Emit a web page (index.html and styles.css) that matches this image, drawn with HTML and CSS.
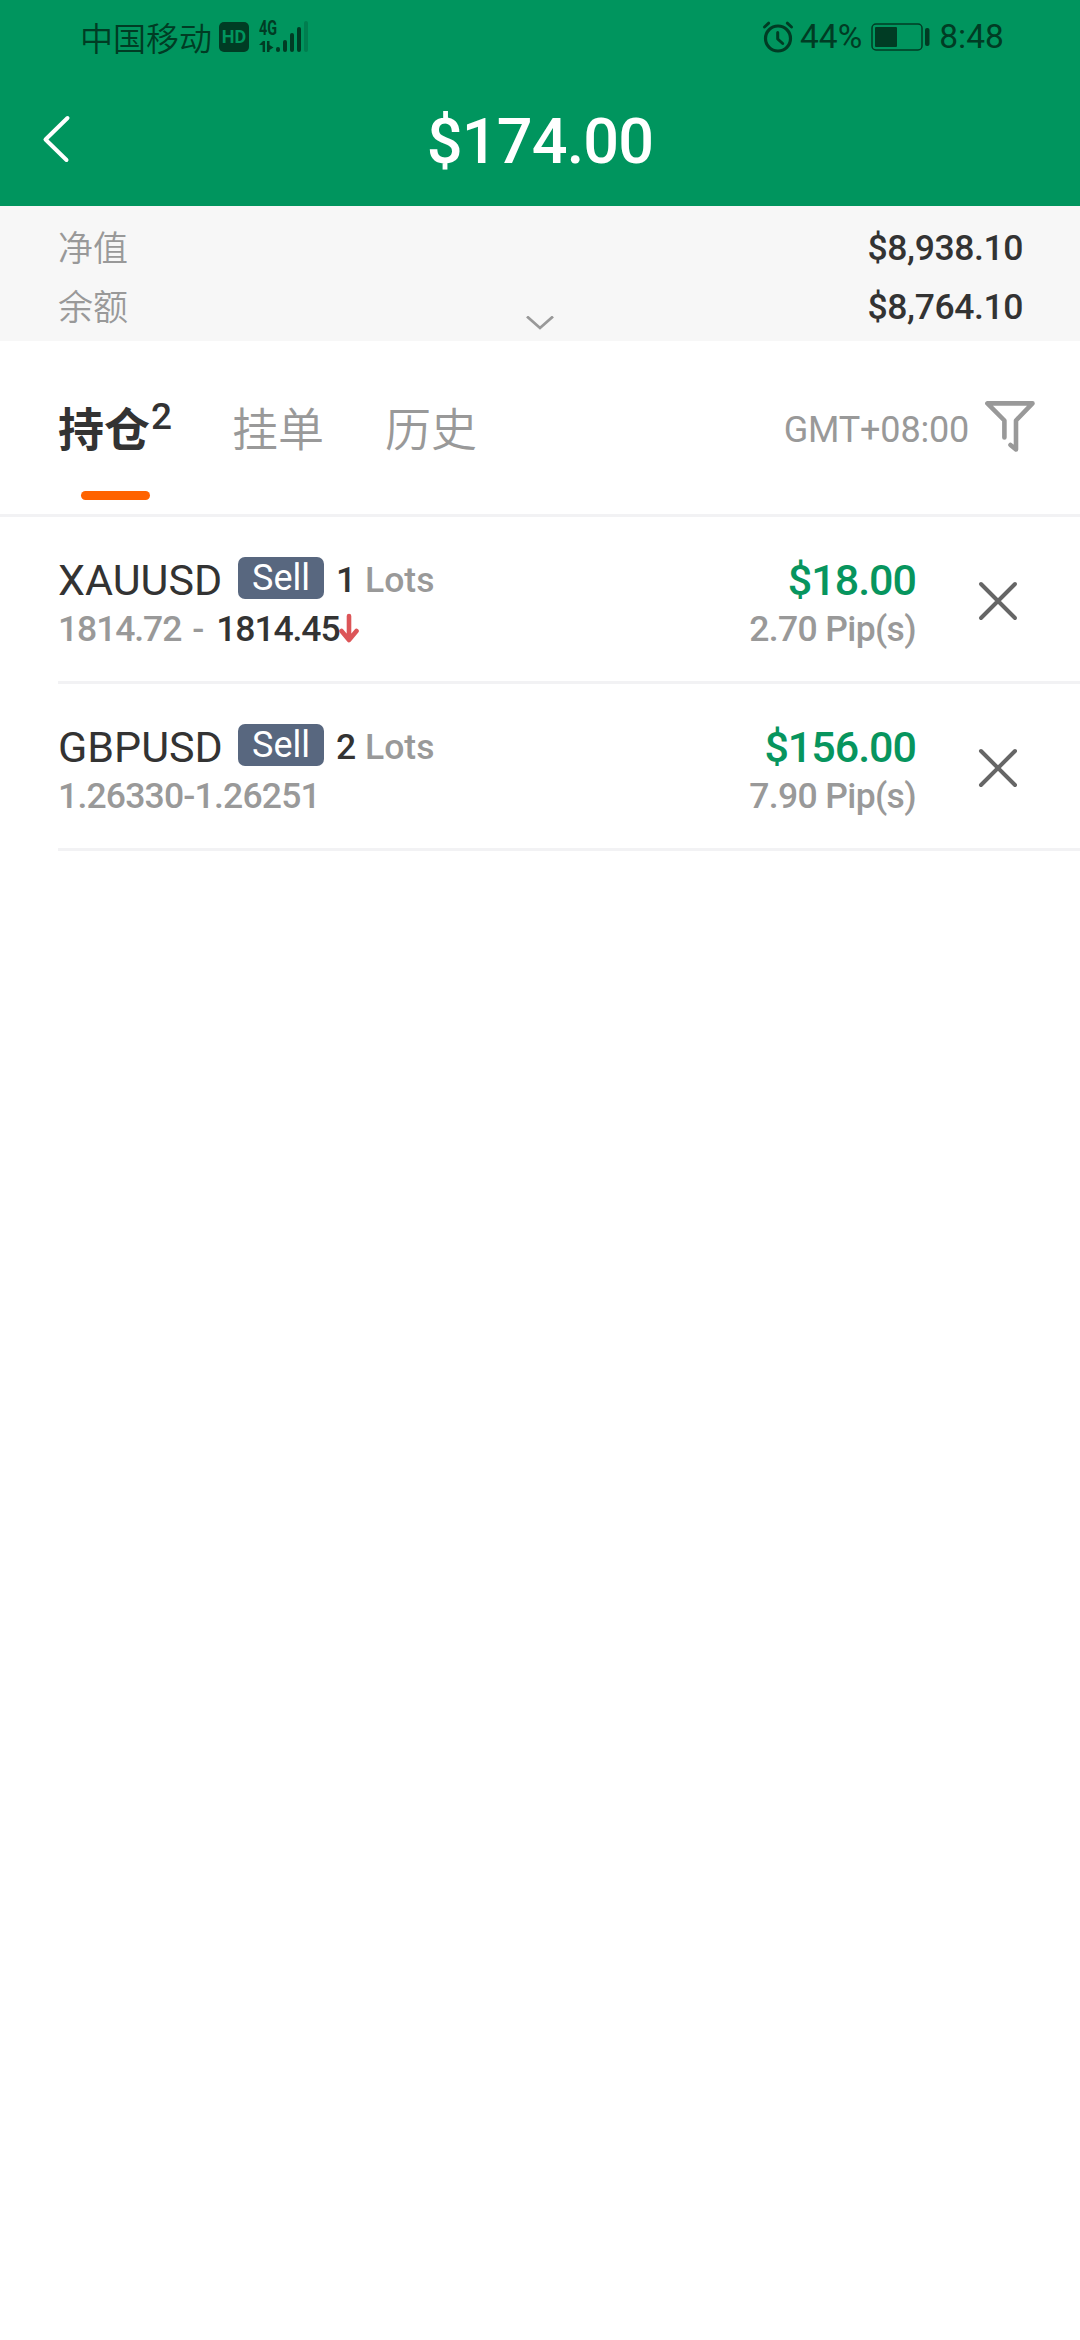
FILE: index.html
```html
<!DOCTYPE html>
<html lang="zh-CN">
<head>
<meta charset="utf-8">
<title>持仓</title>
<link rel="stylesheet" href="styles.css">
</head>
<body>
<header class="header">
  <div class="status">
    <span class="carrier">中国移动</span>
    <span class="hd">HD</span>
    <span class="signal">
      <span class="network">4G</span>
      <svg class="bars" width="50" height="34" viewBox="0 0 50 34" fill="#003c24">
        <path d="M0 25 4 21h2v11H3.600v-7zM8 21h2.500v4l4 2.500-4 2.500v2H8z"/>
        <rect x="17" y="27" width="4" height="5" rx="2"/>
        <rect x="24" y="20" width="4" height="12" rx="2"/>
        <rect x="31" y="13" width="4" height="19" rx="2"/>
        <rect x="38" y="7" width="4" height="25" rx="2"/>
        <rect x="45" y="1" width="4" height="31" rx="2" opacity=".25"/>
      </svg>
    </span>
    <svg class="alarm" width="32" height="32" viewBox="0 0 32 32" fill="none" stroke="#003c24" stroke-linecap="round" stroke-linejoin="round">
      <circle cx="16" cy="17.500" r="12.500" stroke-width="3.200"/>
      <path d="M15.700 11.500v6.500l5 4.500" stroke-width="3"/>
      <path d="M2.500 6 6.700 2.200M25.300 2.200 29.500 6" stroke-width="3"/>
    </svg>
    <span class="percent">44%</span>
    <svg class="battery" width="60" height="28" viewBox="0 0 60 28">
      <rect x="1" y="1" width="50" height="26" rx="4" fill="none" stroke="#003c24" stroke-width="1.500"/>
      <rect x="4" y="4" width="22" height="20" rx="1" fill="#003c24"/>
      <rect x="54" y="5" width="4.500" height="18" rx="2" fill="#003c24"/>
    </svg>
    <span class="clock">8:48</span>
  </div>
  <div class="titlebar">
    <svg class="back" width="30" height="50" viewBox="0 0 30 50" fill="none" stroke="#fff" stroke-width="4" stroke-linecap="round" stroke-linejoin="round">
      <path d="M25.500 4 3.500 25.500 24.500 46"/>
    </svg>
    <h1 class="total">$174.00</h1>
  </div>
</header>

<section class="summary">
  <div class="summary-row"><span class="label">净值</span><span class="amount">$8,938.10</span></div>
  <div class="summary-row"><span class="label">余额</span><span class="amount">$8,764.10</span></div>
  <svg class="expand" width="28" height="14" viewBox="0 0 28 14" fill="none" stroke="#999" stroke-width="2.800">
    <path d="M1 0.500 14 12 27 0.500"/>
  </svg>
</section>

<nav class="tabs">
  <span class="tab active">持仓<span class="count">2</span></span>
  <span class="tab pending">挂单</span>
  <span class="tab">历史</span>
  <span class="zone">GMT+08:00</span>
  <svg class="filter" width="52" height="54" viewBox="0 0 52 54" fill="none" stroke="#999" stroke-width="4.600" stroke-linecap="round" stroke-linejoin="round">
    <path d="M20.400 37.500V20.500L3.400 3.400H48.500L32 20.500V49.500L26.500 45"/>
  </svg>
</nav>

<main class="positions">
  <article class="position">
    <div class="info">
      <div class="line">
        <span class="symbol">XAUUSD</span><span class="side">Sell</span><span class="qty">1</span><span class="lots">Lots</span>
      </div>
      <div class="line prices">
        <span class="open">1814.72</span><span class="dash">-</span><span class="current">1814.45</span>
        <svg class="down" width="20" height="32" viewBox="0 0 20 32" fill="none" stroke="#dc5558" stroke-width="4.600" stroke-linecap="round" stroke-linejoin="round">
          <path d="M10 3V26M2.500 18 10 27 17.500 18"/>
        </svg>
      </div>
    </div>
    <div class="result">
      <div class="line profit">$18.00</div>
      <div class="line pips">2.70 Pip(s)</div>
    </div>
    <svg class="close" width="42" height="42" viewBox="0 0 42 42" fill="none" stroke="#666" stroke-width="4" stroke-linecap="round">
      <path d="M4 4 38 38M38 4 4 38"/>
    </svg>
  </article>
  <article class="position">
    <div class="info">
      <div class="line">
        <span class="symbol">GBPUSD</span><span class="side">Sell</span><span class="qty">2</span><span class="lots">Lots</span>
      </div>
      <div class="line prices"><span class="range">1.26330-1.26251</span></div>
    </div>
    <div class="result">
      <div class="line profit">$156.00</div>
      <div class="line pips">7.90 Pip(s)</div>
    </div>
    <svg class="close" width="42" height="42" viewBox="0 0 42 42" fill="none" stroke="#666" stroke-width="4" stroke-linecap="round">
      <path d="M4 4 38 38M38 4 4 38"/>
    </svg>
  </article>
</main>
</body>
</html>
```
FILE: styles.css
```css
* { box-sizing: border-box; }

body {
  margin: 0;
  min-height: 2340px;
  background: #fff;
  color: #333;
  font-family: Roboto, "Noto Sans CJK SC", sans-serif;
}

svg { display: block; flex: none; }

.header {
  height: 206px;
  background: #00955e;
  color: #003c24;
}

.status {
  display: flex;
  align-items: center;
  height: 73px;
  padding-left: 80px;
  white-space: nowrap;
}

.carrier {
  width: 139px;
  font-family: "Noto Sans CJK SC", sans-serif;
  font-size: 33px;
  font-weight: 350;
  line-height: 70px;
}

.hd {
  width: 30px;
  height: 30px;
  border-radius: 5px;
  background: #003c24;
  color: #00955e;
  font-size: 18px;
  font-weight: 700;
  line-height: 30px;
  text-align: center;
}

.signal {
  display: grid;
  margin-left: 10px;
}

.network, .bars { grid-area: 1 / 1; }

.network {
  font-size: 20px;
  font-weight: 700;
  line-height: 16px;
  transform: scaleX(.72);
  transform-origin: left;
}

.alarm { margin-left: 453px; }

.percent { margin-left: 6px; font-size: 33.500px; line-height: 40px; padding-top: 1px; }

.battery { margin-left: 9px; }

.clock { margin-left: 8px; padding-top: 1px; font-size: 33.500px; line-height: 40px; }

.titlebar {
  display: grid;
  grid-template-columns: 120px 1fr 120px;
  align-items: start;
  height: 133px;
}

.back { margin: 41px 0 0 42px; }

.total {
  margin: 28px 0 0;
  color: #fff;
  font-size: 63px;
  font-weight: 500;
  letter-spacing: -.8px;
  line-height: 81px;
  text-align: center;
}

.summary {
  position: relative;
  height: 135px;
  padding: 13px 57px 0 58px;
  background: #f7f7f7;
}

.summary-row {
  display: flex;
  justify-content: space-between;
  height: 59px;
  line-height: 59px;
}

.label {
  color: #999;
  font-family: "Noto Sans CJK SC", sans-serif;
  font-size: 35px;
  font-weight: 350;
  line-height: 53px;
}

.amount {
  font-size: 35.500px;
  font-weight: 500;
  letter-spacing: -.4px;
}

.expand {
  position: absolute;
  top: 110px;
  left: 526px;
}

.tabs {
  display: flex;
  height: 176px;
  padding-left: 58px;
  border-bottom: 3px solid #f2f2f4;
  line-height: 171px;
}

.tab {
  color: #999;
  font-family: "Noto Sans CJK SC", sans-serif;
  font-size: 46px;
  font-weight: 350;
}

.active {
  position: relative;
  width: 174px;
  color: #333;
  font-weight: 700;
}

.active::after {
  position: absolute;
  top: 150px;
  left: 23px;
  width: 69px;
  height: 9px;
  border-radius: 5px;
  background: #ff6300;
  content: "";
}

.count {
  display: inline-block;
  margin-left: 1px;
  font-family: Roboto, sans-serif;
  font-size: 37px;
  font-weight: 500;
  line-height: 40px;
  vertical-align: 17px;
}

.pending { width: 153px; }

.zone {
  margin-left: auto;
  color: #999;
  font-size: 36px;
  letter-spacing: -.2px;
  line-height: 178px;
}

.filter { margin: 59px 44px 0 15px; }

.position {
  display: flex;
  height: 167px;
  margin-left: 58px;
  padding-top: 38px;
  border-bottom: 3px solid #f2f2f4;
}

.info { flex: 1; }

.line {
  display: flex;
  align-items: center;
  height: 50px;
  line-height: 50px;
  white-space: nowrap;
}

.symbol {
  width: 180px;
  font-size: 43px;
}

.side {
  width: 86px;
  height: 42px;
  margin-bottom: 4px;
  border-radius: 7px;
  background: #58677f;
  color: #fff;
  font-size: 36px;
  line-height: 42px;
  text-align: center;
}

.qty {
  width: 41px;
  padding-left: 12px;
  font-size: 35.500px;
  font-weight: 500;
}

.lots {
  color: #999;
  font-size: 35.500px;
  font-weight: 500;
}

.prices, .pips {
  height: 49px;
  color: #999;
  font-size: 35.500px;
  font-weight: 500;
  line-height: 49px;
}

.open, .current { letter-spacing: -1.100px; }

.dash { width: 24px; margin-left: 11px; }

.current { color: #333; }

.down { margin: 0 0 2px; }

.range { letter-spacing: -.800px; }

.pips { letter-spacing: -.650px; }

.result { margin-right: 61px; }

.result .line { justify-content: flex-end; }

.profit {
  color: #07955e;
  font-size: 43px;
  font-weight: 500;
  letter-spacing: -1px;
}

.close { margin: 25px 61px 0 0; }
```
